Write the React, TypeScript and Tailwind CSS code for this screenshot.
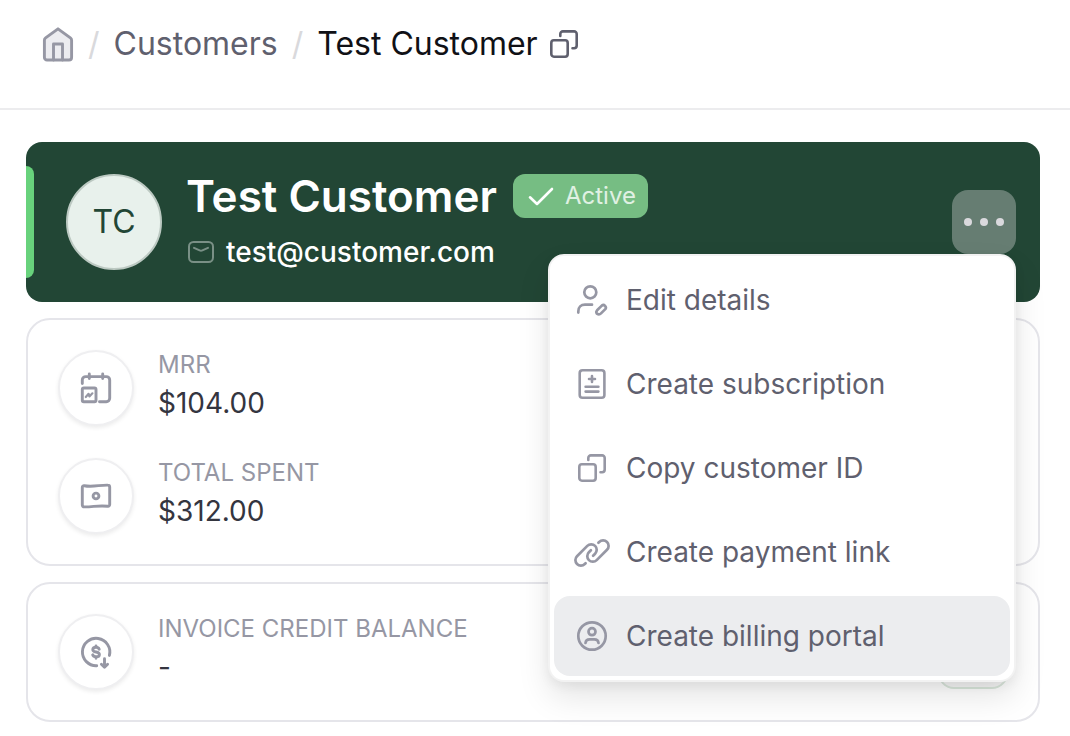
import type { ReactNode } from "react";

type SvgProps = { strokeWidth?: number; children: ReactNode };

const Svg = ({ strokeWidth = 2.9, children }: SvgProps) => (
  <svg
    viewBox="0 0 32 32"
    fill="none"
    stroke="currentColor"
    strokeWidth={strokeWidth}
    strokeLinecap="round"
    strokeLinejoin="round"
    aria-hidden="true"
    className="size-8 shrink-0 overflow-visible"
  >
    {children}
  </svg>
);

const HomeIcon = () => (
  <Svg>
    <path
      d="M2.4 12.2c0-1 .4-1.8 1.2-2.4L16 .8l12.4 9c.8.6 1.2 1.4 1.2 2.4v17.2a2.6 2.6 0 0 1-2.6 2.6H5a2.6 2.6 0 0 1-2.6-2.6z"
      fill="#ececf0"
    />
    <path d="M11.5 32V16h9v16" />
  </Svg>
);

const CopyIcon = () => (
  <Svg strokeWidth={2.6}>
    <rect x="3.3" y="12.3" width="16.4" height="16.4" rx="2.6" />
    <path d="M12.3 8V6a2.6 2.6 0 0 1 2.6-2.6h11.2A2.6 2.6 0 0 1 28.7 6v11.6a2.6 2.6 0 0 1-2.6 2.6h-1.6" />
  </Svg>
);

const CalendarIcon = () => (
  <Svg>
    <path d="M2.3 11.5V8a3.4 3.4 0 0 1 3.4-3.4h20.6A3.4 3.4 0 0 1 29.7 8v18.3a3.4 3.4 0 0 1-3.4 3.4h-6.8M9.3 2v4.5M22.7 2v4.5" />
    <rect x="2.3" y="16" width="13.7" height="13.7" rx="1.5" />
    <path d="m5.8 25 2.8-3.2.8 2.6 3-3.1" strokeWidth={2.2} />
  </Svg>
);

const BanknoteIcon = () => (
  <Svg>
    <path d="M2.3 7.4c0-1.1.9-1.9 2-1.7 8.500 1.600 15.200-.8 23.500-.6 1.100 0 1.900.8 1.900 1.900v17.600c0 1.100-.9 1.900-2 1.700-8.500-1.300-15.200.8-23.500.6-1.100 0-1.900-.8-1.900-1.900z" />
    <circle cx="16" cy="16" r="2.9" />
  </Svg>
);

const CreditIcon = () => (
  <Svg>
    <path d="M29.4 19.4A13.7 13.7 0 1 0 16.7 29.7M24.5 22.8v8.4M21.4 28.3l3.1 3 3.1-3" />
    <path d="M19.2 13.2c-.5-1.2-1.6-1.9-3.2-1.9-1.9 0-3.2.9-3.2 2.4 0 3.3 6.6 1.3 6.6 4.7 0 1.5-1.4 2.4-3.4 2.4-1.7 0-2.9-.7-3.3-2M16 10v1.3M16 20.8v1.5" />
  </Svg>
);

const UserEditIcon = () => (
  <Svg strokeWidth={2.7}>
    <circle cx="14.3" cy="8.3" r="6" />
    <path d="M2.3 28.6v-1.2c0-4 2.7-6.7 6.7-6.7h7" />
    <path d="M20.8 29.6c-.6-1-.6-2.3.3-3.3l4.7-4.7a2.5 2.5 0 0 1 3.5 3.5l-4.3 4.3c-1 1-2.700 1.200-4.200.2z" />
  </Svg>
);

const SubscriptionIcon = () => (
  <Svg strokeWidth={2.6}>
    <rect x="3.7" y="2.3" width="24.7" height="27.4" rx="2.8" />
    <path d="M16 8v6M13 11h6M9.6 18.8h12.8M9.6 23.6h12.8" />
  </Svg>
);

const LinkIcon = () => (
  <Svg strokeWidth={2.7}>
    <path d="m9.600 27.200-.8.8A5.500 5.500 0 0 1 1 20.200L11.300 9.900a5.500 5.500 0 0 1 7.800 7.800l-2 2" />
    <path d="m22.400 6.800.8-.8a5.500 5.500 0 0 1 7.800 7.800L20.700 24.100a5.500 5.500 0 0 1-7.800-7.800l2-2" />
  </Svg>
);

const PortalIcon = () => (
  <Svg strokeWidth={2.7}>
    <circle cx="16" cy="16" r="13.7" />
    <circle cx="16" cy="11.7" r="3.5" />
    <path d="M9.5 23c.2-2.4 1.7-3.7 4.2-3.7h4.6c2.5 0 4 1.3 4.2 3.7" />
  </Svg>
);

const menuItems = [
  { label: "Edit details", icon: <UserEditIcon /> },
  { label: "Create subscription", icon: <SubscriptionIcon /> },
  { label: "Copy customer ID", icon: <CopyIcon /> },
  { label: "Create payment link", icon: <LinkIcon /> },
  { label: "Create billing portal", icon: <PortalIcon />, active: true },
];

const Stat = ({ icon, label, value }: { icon: ReactNode; label: string; value: string }) => (
  <div className="flex gap-6">
    <div className="flex size-[76px] shrink-0 items-center justify-center rounded-full border-2 border-[#efeff1] bg-white text-[#9697a4] shadow-[0_2px_4px_rgba(0,0,0,0.08)]">
      {icon}
    </div>
    <dl>
      <dt className="text-2xl leading-[30px] text-[#9697a4]">{label}</dt>
      <dd className="text-[28px] leading-[46px] text-[#34353f]">{value}</dd>
    </dl>
  </div>
);

const ActionsMenu = () => (
  <div className="relative shrink-0">
    <button
      type="button"
      aria-label="Customer actions"
      aria-haspopup="menu"
      aria-expanded="true"
      className="flex size-16 items-center justify-center gap-2 rounded-2xl bg-[#667d72]"
    >
      <span className="size-2 rounded-full bg-[#dad9dd]" />
      <span className="size-2 rounded-full bg-[#dad9dd]" />
      <span className="size-2 rounded-full bg-[#dad9dd]" />
    </button>
    <div
      role="menu"
      className="absolute top-full right-0 z-10 flex w-[468px] flex-col gap-1 rounded-2xl border-2 border-black/5 bg-white p-1 shadow-[0_16px_32px_rgba(0,0,0,0.1),0_4px_12px_rgba(0,0,0,0.06)]"
    >
      {menuItems.map((item) => (
        <button
          key={item.label}
          type="button"
          role="menuitem"
          className={`flex h-20 items-center gap-[18px] rounded-2xl px-[22px] text-left text-[28px] text-[#5f606e] ${item.active ? "bg-[#ecedef]" : ""}`}
        >
          <span className="text-[#9697a4]">{item.icon}</span>
          {item.label}
        </button>
      ))}
    </div>
  </div>
);

export default function App() {
  return (
    <div className="bg-white font-[Inter,sans-serif]">
      <header className="border-b-2 border-[#ececee] px-[42px] pt-6 pb-11">
        <nav aria-label="Breadcrumb" className="flex h-10 items-center gap-[14px] text-[32px]">
          <a href="#" aria-label="Home" className="text-[#9697a4]">
            <HomeIcon />
          </a>
          <span className="text-[#d9d9dc]">/</span>
          <a href="#" className="text-[#5f606e]">
            Customers
          </a>
          <span className="text-[#d9d9dc]">/</span>
          <div className="flex items-center gap-[10px]">
            <span className="text-[#101116]">Test Customer</span>
            <button type="button" aria-label="Copy customer name" className="text-[#5f606e]">
              <CopyIcon />
            </button>
          </div>
        </nav>
      </header>

      <main className="flex flex-col gap-4 py-8 pr-[30px] pl-[26px]">
        <section className="flex h-40 items-center rounded-2xl bg-[#224635] pr-6">
          {/* Status stripe */}
          <div className="h-28 w-2 rounded-r-lg bg-[#68d27c]" />
          <div className="ml-8 flex size-24 shrink-0 items-center justify-center rounded-full border-2 border-[#bcc9c2] bg-[#e8f1ec] text-[32px] text-[#224635]">
            TC
          </div>
          <div className="ml-6 flex-1">
            <div className="flex items-center gap-4">
              <h1 className="text-[44px] leading-[52px] font-semibold text-white">Test Customer</h1>
              <span className="flex h-11 items-center gap-2 rounded-xl bg-[#76bd83] px-3 text-2xl text-[#e0f1e3]">
                <svg viewBox="0 0 32 32" fill="none" className="size-8 text-white" aria-hidden="true">
                  <path
                    d="m5 17.3 7 6.7L27 9"
                    stroke="currentColor"
                    strokeWidth={2.6}
                    strokeLinecap="round"
                    strokeLinejoin="round"
                  />
                </svg>
                Active
              </span>
            </div>
            <div className="mt-2 flex items-center gap-3 pl-[2px] text-[28px] leading-[44px] font-medium text-white">
              <svg viewBox="0 0 26 22" fill="none" className="h-[22px] w-[26px] text-[#7a9086]" aria-hidden="true">
                <rect x="1" y="1" width="24" height="20" rx="4.5" stroke="currentColor" strokeWidth="2" />
                <path
                  d="m6 6.8 5.6 2.6a3 3 0 0 0 2.8 0L20 6.8"
                  stroke="currentColor"
                  strokeWidth="2"
                  strokeLinecap="round"
                />
              </svg>
              <a href="mailto:test@customer.com">test@customer.com</a>
            </div>
          </div>
          <ActionsMenu />
        </section>

        <section className="flex flex-col gap-8 rounded-3xl border-2 border-[#e5e5ea] p-[30px]">
          <Stat icon={<CalendarIcon />} label="MRR" value="$104.00" />
          <Stat icon={<BanknoteIcon />} label="TOTAL SPENT" value="$312.00" />
        </section>

        <section className="flex items-center justify-between rounded-3xl border-2 border-[#e5e5ea] p-[30px]">
          <Stat icon={<CreditIcon />} label="INVOICE CREDIT BALANCE" value="-" />
          <button
            type="button"
            aria-label="Adjust balance"
            className="h-[74px] w-[70px] rounded-2xl border-2 border-[#dbe8dd] bg-[#f7f7f7]"
          />
        </section>
      </main>
    </div>
  );
}
